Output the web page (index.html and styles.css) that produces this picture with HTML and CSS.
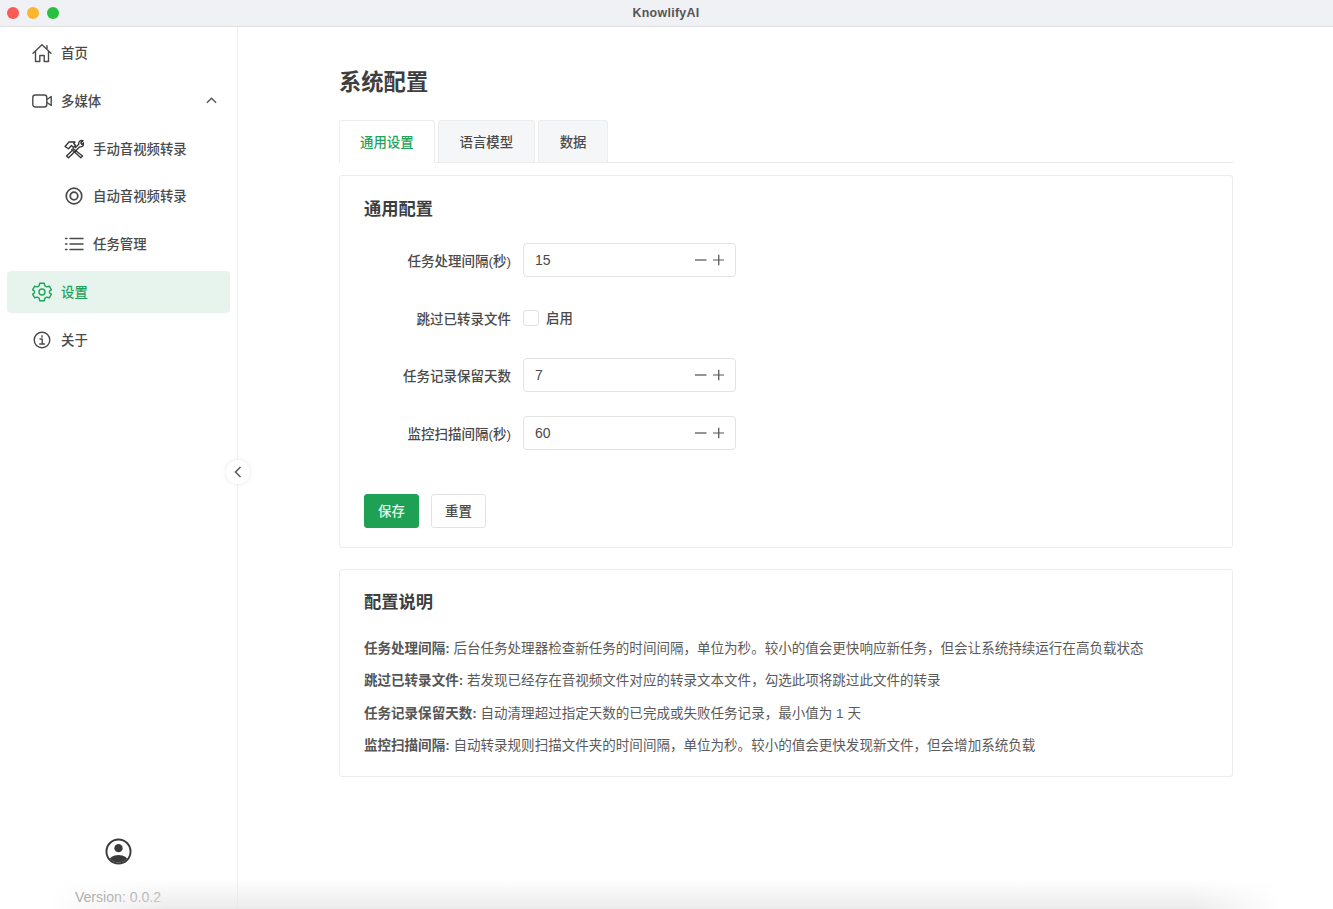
FILE: index.html
```html
<!DOCTYPE html>
<html lang="zh">
<head>
<meta charset="utf-8">
<title>KnowlifyAI</title>
<link rel="stylesheet" href="styles.css">
</head>
<body>
<div class="window">
  <header class="titlebar">
    <div class="lights"><span class="light red"></span><span class="light yellow"></span><span class="light green"></span></div>
    <div class="app-title">KnowlifyAI</div>
  </header>
  <div class="body">
    <aside class="sidebar">
      <nav class="menu">
        <a class="item">
          <svg class="ico" viewBox="0 0 20 20"><path d="M1 10.200 10 1.800l9 8.400M3.500 8V18.500H7.800V12.500h4.400v6h4.300V8M15 5.500V2.800"/></svg>
          <span>首页</span>
        </a>
        <a class="item">
          <svg class="ico" viewBox="0 0 20 20"><rect x="0.800" y="4" width="14" height="12" rx="2.500"/><path d="M15 8.500 19.200 5.500V14.500L15 11.500"/></svg>
          <span class="grow">多媒体</span>
          <svg class="caret" viewBox="0 0 12 12"><path d="M1 8.500 6 3.500 11 8.500"/></svg>
        </a>
        <a class="item sub">
          <svg class="ico tools" viewBox="0 0 20 20"><path d="M1 7.500 5 3H11L9.800 4.500 11.500 6.500 9.500 8.500 7.500 6.500 4.500 9.800zM9 9.500 18.500 17 16.800 18.800 7.800 10.500M11.500 8.500 14.800 5.200C14.300 3 16.300.8 19 1.700L16.800 4 18 5.500 19.800 3.800C20.200 6.500 18 8.300 15.800 7.800L4.500 18.800 2.500 17 8 11.800"/></svg>
          <span>手动音视频转录</span>
        </a>
        <a class="item sub">
          <svg class="ico ring" viewBox="0 0 20 20"><circle cx="10" cy="10" r="7.800"/><circle cx="10" cy="10" r="3.800"/></svg>
          <span>自动音视频转录</span>
        </a>
        <a class="item sub">
          <svg class="ico" viewBox="0 0 20 20"><path d="M6 4.500H19M6 10H19M6 15.500H19M1.500 4.500H3M1.500 10H3M1.500 15.500H3"/></svg>
          <span>任务管理</span>
        </a>
        <a class="item active">
          <svg class="ico" viewBox="0 0 20 20"><circle cx="10" cy="10" r="3"/><path d="M7.800 1.300H12.200L12.900 3.900 14.700 4.900 17.300 4.200 19.400 7.800 17.500 9V11L19.400 12.200 17.300 15.800 14.700 15.100 12.900 16.100 12.200 18.700H7.800L7.100 16.100 5.300 15.100 2.700 15.800.6 12.200 2.500 11V9L.6 7.800 2.700 4.200 5.300 4.900 7.100 3.900z"/></svg>
          <span>设置</span>
        </a>
        <a class="item">
          <svg class="ico" viewBox="0 0 20 20"><circle cx="10" cy="10" r="7.800"/><path d="M8 9H10.200V14M7.800 14H12.500M10 5.800V7"/></svg>
          <span>关于</span>
        </a>
      </nav>
      <div class="side-foot">
        <svg class="user" viewBox="0 0 28 28"><defs><clipPath id="uc"><circle cx="14" cy="14" r="11.500"/></clipPath></defs><circle class="user-ring" cx="14" cy="14" r="12.500"/><circle class="user-fill" cx="14" cy="10.500" r="4.300"/><ellipse class="user-fill" cx="14" cy="24" rx="10" ry="6.500" clip-path="url(#uc)"/></svg>
        <div class="version">Version: 0.0.2</div>
      </div>
      <button class="collapse" type="button" aria-label="收起"><svg viewBox="0 0 12 12"><path d="M8.500 1 3.500 6 8.500 11"/></svg></button>
    </aside>
    <main class="main">
      <h1 class="page-title">系统配置</h1>
      <div class="tabs">
        <div class="tab on">通用设置</div>
        <div class="tab">语言模型</div>
        <div class="tab">数据</div>
      </div>
      <section class="card form-card">
        <h2 class="card-title">通用配置</h2>
        <div class="form">
          <div class="row">
            <label class="label">任务处理间隔(秒)</label>
            <div class="num"><span class="val">15</span><svg class="step" viewBox="0 0 12 12"><path d="M0 6H12"/></svg><svg class="step" viewBox="0 0 12 12"><path d="M0 6H12M6 .5V11.500"/></svg></div>
          </div>
          <div class="row">
            <label class="label">跳过已转录文件</label>
            <div class="check"><span class="box"></span><span class="check-text">启用</span></div>
          </div>
          <div class="row">
            <label class="label">任务记录保留天数</label>
            <div class="num"><span class="val">7</span><svg class="step" viewBox="0 0 12 12"><path d="M0 6H12"/></svg><svg class="step" viewBox="0 0 12 12"><path d="M0 6H12M6 .5V11.500"/></svg></div>
          </div>
          <div class="row">
            <label class="label">监控扫描间隔(秒)</label>
            <div class="num"><span class="val">60</span><svg class="step" viewBox="0 0 12 12"><path d="M0 6H12"/></svg><svg class="step" viewBox="0 0 12 12"><path d="M0 6H12M6 .5V11.500"/></svg></div>
          </div>
        </div>
        <div class="actions">
          <button class="btn primary" type="button">保存</button>
          <button class="btn" type="button">重置</button>
        </div>
      </section>
      <section class="card note-card">
        <h2 class="card-title">配置说明</h2>
        <p class="note"><b>任务处理间隔:</b> 后台任务处理器检查新任务的时间间隔，单位为秒。较小的值会更快响应新任务，但会让系统持续运行在高负载状态</p>
        <p class="note"><b>跳过已转录文件:</b> 若发现已经存在音视频文件对应的转录文本文件，勾选此项将跳过此文件的转录</p>
        <p class="note"><b>任务记录保留天数:</b> 自动清理超过指定天数的已完成或失败任务记录，最小值为 1 天</p>
        <p class="note"><b>监控扫描间隔:</b> 自动转录规则扫描文件夹的时间间隔，单位为秒。较小的值会更快发现新文件，但会增加系统负载</p>
      </section>
    </main>
  </div>
  <div class="fade"></div>
</div>
</body>
</html>
```
FILE: styles.css
```css
* { box-sizing: border-box; }
html, body { margin: 0; height: 100%; overflow: hidden; background: #fff; }
body { font-family: "Liberation Sans", "Noto Sans CJK SC", sans-serif; font-size: 13.4px; color: #4a4a4a; }
.window { position: relative; height: 909px; display: flex; flex-direction: column; overflow: hidden; }

.titlebar { height: 27px; flex: none; background: #f0f1f5; border-bottom: 1px solid #e0e0e2; display: flex; align-items: center; padding-left: 7px; }
.lights { display: flex; gap: 8px; margin-top: -1px; }
.light { width: 12px; height: 12px; border-radius: 50%; }
.red { background: #fb5a54; }
.yellow { background: #fdb52e; }
.green { background: #28c13f; }
.app-title { flex: 1; text-align: center; font-size: 12.4px; font-weight: 700; color: #555; margin-top: -1px; margin-right: 60px; letter-spacing: .3px; }

.body { flex: 1; display: flex; min-height: 0; }

.sidebar { width: 238px; flex: none; border-right: 1px solid #efefef; position: relative; display: flex; flex-direction: column; padding: 5px 7px 0 7px; }
.menu { flex: 1; display: flex; flex-direction: column; gap: 5.830px; }
.item { height: 42px; display: flex; align-items: center; border-radius: 4px; padding: 0 13px 2px 25px; gap: 9px; color: #4a4a4a; font-weight: 500; }
.item .ico { margin-top: 2px; }
.item.sub { padding-left: 57px; }
.item.active { background: #e6f4ed; color: #1fa35a; }
.grow { flex: 1; }
.ico { width: 20px; height: 20px; flex: none; fill: none; stroke: currentColor; stroke-width: 1.400; stroke-linejoin: round; stroke-linecap: round; }
.tools { stroke-width: 1.300; stroke: #333; }
.ring { stroke-width: 1.700; }
.caret { width: 11px; height: 11px; margin-top: 2px; fill: none; stroke: #555; stroke-width: 1.500; }

.side-foot { display: flex; flex-direction: column; align-items: center; padding-right: 1px; }
.user { width: 27px; height: 27px; margin-bottom: 24px; }
.user-ring { fill: #fff; stroke: #3a3a3a; stroke-width: 2; }
.user-fill { fill: #3a3a3a; }
.version { color: #a6a6a6; font-size: 14.100px; line-height: 16px; height: 20px; }

.collapse { position: absolute; right: -13px; top: 433px; width: 24px; height: 24px; border-radius: 50%; border: 0; padding: 0; background: #fff; box-shadow: 0 0 4px rgba(0,0,0,.1); display: flex; align-items: center; justify-content: center; }
.collapse svg { width: 12px; height: 12px; fill: none; stroke: #555; stroke-width: 1.500; }

.main { flex: 1; min-width: 0; padding: 41px 100px 0 101px; }
.page-title { margin: 0 0 22px; font-size: 22.300px; line-height: 30px; font-weight: 700; color: #3e3e3e; }

.tabs { display: flex; gap: 3.500px; height: 43px; border-bottom: 1px solid #ebebeb; margin-bottom: 12px; }
.tab { height: 43px; padding: 0 20.500px 2px; display: flex; align-items: center; border: 1px solid #ececec; border-radius: 3px 3px 0 0; background: #f5f6f8; color: #4a4a4a; font-weight: 500; }
.tab.on { background: #fff; color: #1fa35a; border-bottom-color: #fff; padding: 0 20px 2px; }

.card { border: 1px solid #ececec; border-radius: 3px; padding: 0 24px; background: #fff; }
.form-card { height: 373px; padding-top: 21px; }
.note-card { margin-top: 21px; height: 208px; padding-top: 20px; }
.card-title { margin: 0; font-size: 17.300px; line-height: 24px; font-weight: 700; color: #3e3e3e; }

.form { margin-top: 22px; display: flex; flex-direction: column; gap: 23.500px; }
.row { height: 34px; display: flex; align-items: center; gap: 12px; }
.label { width: 147px; text-align: right; font-size: 13.500px; font-weight: 500; }
.num { width: 213px; height: 34px; border: 1px solid #e3e3e3; border-radius: 4px; display: flex; align-items: center; padding: 0 11px 0 11px; gap: 6px; font-size: 14px; }
.val { flex: 1; }
.step { width: 11.500px; height: 12px; fill: none; stroke: #555; stroke-width: 1.300; }
.check { display: flex; align-items: center; gap: 7px; }
.check-text { padding-bottom: 2px; font-weight: 500; }
.box { width: 16px; height: 16px; border: 1px solid #e0e0e0; border-radius: 3px; }

.actions { margin-top: 44px; display: flex; gap: 12px; }
.btn { width: 55px; height: 34px; border: 1px solid #e3e3e3; border-radius: 3px; background: #fff; color: #4a4a4a; font: inherit; font-weight: 500; padding: 0 0 2px; }
.btn.primary { background: #1ea055; border-color: #1ea055; color: #e8f6ee; }

.note { margin: 0; height: 32.300px; line-height: 32.300px; white-space: nowrap; color: #5a5a5a; font-size: 13.540px; }
.note-card .card-title + .note { margin-top: 19px; }
.note b { font-weight: 700; color: #555; }

.fade { position: absolute; left: 0; right: 0; bottom: 0; height: 30px; pointer-events: none; background: linear-gradient(to bottom, rgba(230,230,230,0), rgba(230,230,230,.8)); -webkit-mask-image: linear-gradient(to right, transparent 50px, #000 170px, #000 1190px, transparent 1280px); mask-image: linear-gradient(to right, transparent 50px, #000 170px, #000 1190px, transparent 1280px); }
```
